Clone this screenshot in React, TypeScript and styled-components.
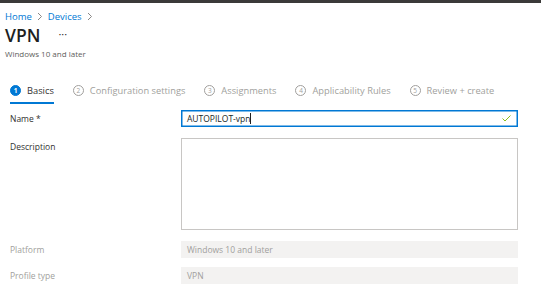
import React from "react";
import styled, { createGlobalStyle } from "styled-components";

const Global = createGlobalStyle`
  html, body { margin: 0; padding: 0; background: #fff; }
  body { font-family: "Open Sans", "Noto Sans", sans-serif; color: #323130; }
`;

const Page = styled.div`
  width: 541px;
  height: 308px;
  overflow: hidden;
  background: #fff;
  border-top: 3px solid #3b3a39;
  box-sizing: border-box;
`;

const Header = styled.div`
  padding: 5px 0 0 5px;
`;

const Breadcrumb = styled.div`
  display: flex;
  align-items: center;
  gap: 5px;
  font-size: 9.5px;
  height: 16px;
`;

const Crumb = styled.a`
  color: #0078d4;
  text-decoration: none;
`;

const Chevron = styled.span`
  display: flex;
`;

const TitleRow = styled.div`
  display: flex;
  align-items: center;
  height: 22px;
`;

const Title = styled.h1`
  margin: 0;
  font-size: 17.5px;
  line-height: 22px;
  font-weight: 600;
  color: #201f1e;
`;

const More = styled.span`
  margin-left: 18px;
  font-size: 11px;
  line-height: 11px;
  color: #323130;
  margin-top: -4px;
`;

const Subtitle = styled.div`
  font-size: 8px;
  line-height: 11px;
  color: #605e5c;
  margin-top: 2px;
`;

const Tabs = styled.div`
  display: flex;
  margin-top: 22px;
  padding-left: 10px;
  gap: 19px;
`;

const Tab = styled.div<{ $active?: boolean }>`
  display: flex;
  align-items: center;
  gap: 6px;
  height: 19px;
  padding-bottom: 2px;
  border-bottom: 2px solid ${(p) => (p.$active ? "#0078d4" : "transparent")};
  font-size: 9.3px;
  color: ${(p) => (p.$active ? "#323130" : "#a19f9d")};
`;

const Step = styled.span<{ $active?: boolean }>`
  width: 11px;
  height: 11px;
  border-radius: 50%;
  box-sizing: border-box;
  display: flex;
  align-items: center;
  justify-content: center;
  font-size: 6.5px;
  font-weight: ${(p) => (p.$active ? 700 : 400)};
  background: ${(p) => (p.$active ? "#0078d4" : "transparent")};
  color: ${(p) => (p.$active ? "#fff" : "#a19f9d")};
  border: 1px solid ${(p) => (p.$active ? "#0078d4" : "#a19f9d")};
`;

const Form = styled.div`
  display: flex;
  flex-direction: column;
  padding-left: 10px;
  margin-top: 6px;
`;

const Row = styled.div<{ $gap: number }>`
  display: grid;
  grid-template-columns: 171px 337px;
  align-items: start;
  margin-bottom: ${(p) => p.$gap}px;
`;

const Label = styled.div<{ $muted?: boolean }>`
  font-size: 8.5px;
  color: ${(p) => (p.$muted ? "#a19f9d" : "#323130")};
  line-height: 17px;
`;

const InputBox = styled.div`
  height: 17px;
  box-sizing: border-box;
  border: 1px solid #0078d4;
  box-shadow: inset 0 0 0 0.5px #0078d4;
  display: flex;
  align-items: center;
  padding: 0 6px 0 5px;
  font-size: 8.5px;
  color: #201f1e;
`;

const Caret = styled.span`
  width: 1px;
  height: 11px;
  background: #201f1e;
`;

const Check = styled.svg`
  margin-left: auto;
`;

const TextArea = styled.div`
  height: 92px;
  box-sizing: border-box;
  border: 1px solid #c8c6c4;
`;

const Disabled = styled.div`
  height: 17px;
  background: #f3f2f1;
  display: flex;
  align-items: center;
  padding-left: 6px;
  font-size: 8.5px;
  color: #a19f9d;
`;

const ChevronIcon = () => (
  <svg width="6" height="9" viewBox="0 0 6 9">
    <path d="M1 1 L4.5 4.5 L1 8" stroke="#8a8886" strokeWidth="1" fill="none" />
  </svg>
);

const steps = [
  "Basics",
  "Configuration settings",
  "Assignments",
  "Applicability Rules",
  "Review + create",
];

export default function App() {
  return (
    <>
      <Global />
      <Page>
        <Header>
          <Breadcrumb>
            <Crumb>Home</Crumb>
            <Chevron>
              <ChevronIcon />
            </Chevron>
            <Crumb>Devices</Crumb>
            <Chevron>
              <ChevronIcon />
            </Chevron>
          </Breadcrumb>
          <TitleRow>
            <Title>VPN</Title>
            <More>···</More>
          </TitleRow>
          <Subtitle>Windows 10 and later</Subtitle>
        </Header>
        <Tabs>
          {steps.map((s, i) => (
            <Tab key={s} $active={i === 0}>
              <Step $active={i === 0}>{i + 1}</Step>
              {s}
            </Tab>
          ))}
        </Tabs>
        <Form>
          <Row $gap={11}>
            <Label>Name *</Label>
            <InputBox>
              AUTOPILOT-vpn
              <Caret />
              <Check width="9" height="7" viewBox="0 0 9 7">
                <path d="M0.5 3.5 L3 6 L8.5 0.5" stroke="#8cbd18" strokeWidth="1" fill="none" />
              </Check>
            </InputBox>
          </Row>
          <Row $gap={11}>
            <Label>Description</Label>
            <TextArea />
          </Row>
          <Row $gap={9}>
            <Label $muted>Platform</Label>
            <Disabled>Windows 10 and later</Disabled>
          </Row>
          <Row $gap={0}>
            <Label $muted>Profile type</Label>
            <Disabled>VPN</Disabled>
          </Row>
        </Form>
      </Page>
    </>
  );
}
